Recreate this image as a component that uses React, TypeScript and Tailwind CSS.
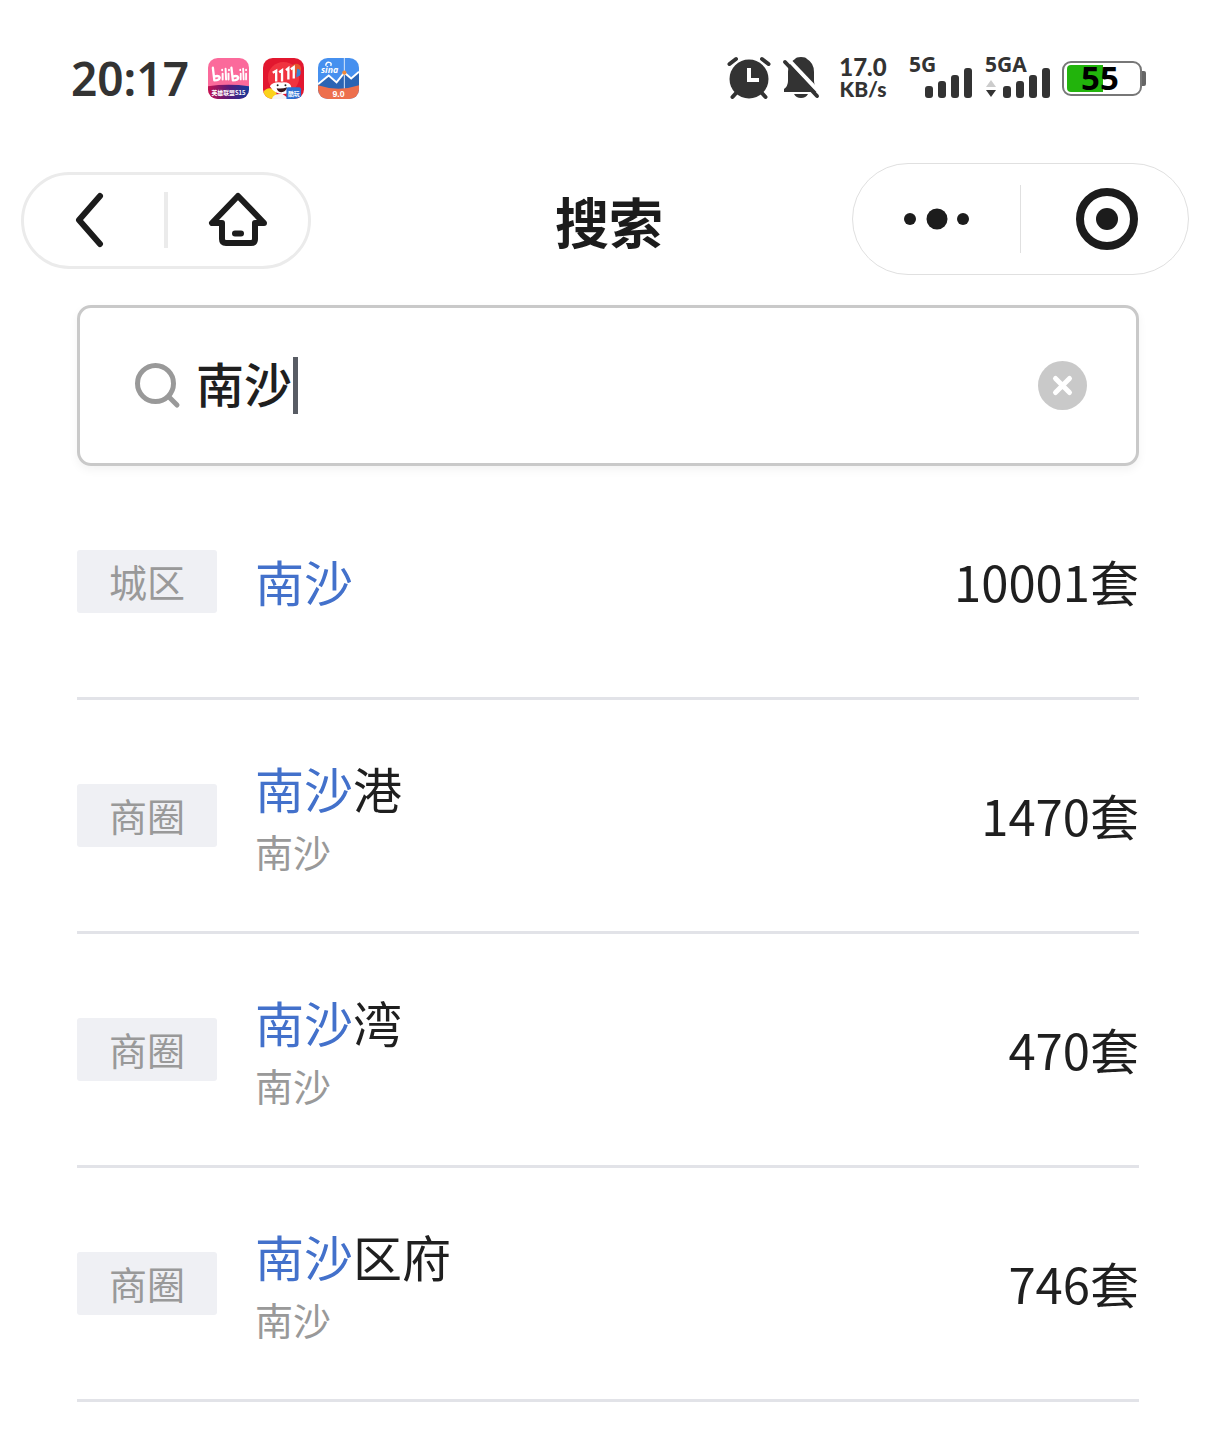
import { useRef, useState } from "react";

type Result = { tag: string; match: string; rest: string; area?: string; count: number };

const results: Result[] = [
  { tag: "城区", match: "南沙", rest: "", count: 10001 },
  { tag: "商圈", match: "南沙", rest: "港", area: "南沙", count: 1470 },
  { tag: "商圈", match: "南沙", rest: "湾", area: "南沙", count: 470 },
  { tag: "商圈", match: "南沙", rest: "区府", area: "南沙", count: 746 },
];

function BiliIcon() {
  return (
    <svg className="size-[41px]" viewBox="0 0 42 42" aria-label="bilibili">
      <defs>
        <linearGradient id="bili-band" x1="0" x2="1">
          <stop offset="0" stopColor="#c3124f" />
          <stop offset="0.5" stopColor="#5a1a78" />
          <stop offset="1" stopColor="#123a9c" />
        </linearGradient>
        <clipPath id="bili-clip"><rect width="42" height="42" rx="10" /></clipPath>
      </defs>
      <g clipPath="url(#bili-clip)">
        <rect width="42" height="42" fill="#fb6a9b" />
        <path d="M0 29Q21 26 42 29V42H0Z" fill="url(#bili-band)" />
        <g fill="none" stroke="#fff" strokeWidth="2.400" strokeLinecap="round" strokeLinejoin="round">
          <path d="M5 10L6.500 23Q12 23 12 20Q11 17.500 6.500 19" />
          <path d="M15 16V22M18 11L18.500 22M21 16V22M14.500 12V12.500M21.500 12V12.500" strokeWidth="2" />
          <path d="M24 10L25.500 23Q31 23 31 20Q30 17.500 25.500 19" />
          <path d="M33.500 16V22M36 11L36.500 22M39 16V22M33 12V12.500M39 12V12.500" strokeWidth="1.800" />
        </g>
        <text x="21" y="37.500" textAnchor="middle" fill="#fff" fontSize="6" fontWeight="700">英雄联盟S15</text>
      </g>
    </svg>
  );
}

function ShoppingIcon() {
  return (
    <svg className="size-[41px]" viewBox="0 0 42 42" aria-label="11.11">
      <defs><clipPath id="shop-clip"><rect width="42" height="42" rx="10" /></clipPath></defs>
      <g clipPath="url(#shop-clip)">
        <rect width="42" height="42" fill="#e2172f" />
        <circle cx="21" cy="20" r="16" fill="#f03340" />
        <circle cx="34" cy="11" r="5" fill="#e4572f" />
        <path d="M35 11Q40 11 38 18L34 20Z" fill="#3e83d0" />
        <g stroke="#fff" strokeWidth="2.400" fill="none" strokeLinejoin="miter">
          <path d="M10 15L13.500 13V24M16.500 14.500L19.500 12.500V24M23.500 12.500L26 10.500V22M28.500 11.500L31.500 9.500V21" />
        </g>
        <path d="M0 42V35Q5 28 13 33L15 42Z" fill="#fbd21c" />
        <path d="M7 29Q10 24 19 25Q28 24 29 30Q28 37 20 37Q12 37 7 29Z" fill="#fff" />
        <circle cx="15" cy="28" r="1" fill="#222" />
        <circle cx="23" cy="28" r="1" fill="#222" />
        <path d="M14 31Q19 32 25 30Q23 35 19 35Q15 35 14 31Z" fill="#38151a" />
        <path d="M9 42Q11 36 20 37L27 42Z" fill="#f4f4f6" />
        <rect x="24" y="30" width="15" height="13" rx="2" fill="#2d6fd2" />
        <text x="31.500" y="38.500" textAnchor="middle" fill="#fff" fontSize="6" fontWeight="700">酷玩</text>
      </g>
    </svg>
  );
}

function SinaIcon() {
  return (
    <svg className="size-[41px]" viewBox="0 0 42 42" aria-label="sina">
      <defs><clipPath id="sina-clip"><rect width="42" height="42" rx="10" /></clipPath></defs>
      <g clipPath="url(#sina-clip)">
        <rect width="42" height="42" fill="#4690ef" />
        <path d="M0 27L11 18L19 25L27 15L34 21L42 14V34H0Z" fill="#2b64b4" />
        <path d="M27 0V32" stroke="#dbe9fb" strokeWidth="1" />
        <path d="M0 27L11 18L19 25L27 15L34 21L42 14" fill="none" stroke="#fff" strokeWidth="2" />
        <path d="M0 28Q21 35 42 28V42H0Z" fill="#ed6f4d" />
        <circle cx="27" cy="15" r="2.200" fill="#f08a3c" />
        <path d="M8 8Q8 4 11.500 4.500Q14.500 5 13 8" fill="none" stroke="#fff" strokeWidth="1.500" />
        <text x="3" y="15" fill="#fff" fontSize="9" fontWeight="700" fontStyle="italic" fontFamily="Open Sans">sina</text>
        <text x="21" y="40" textAnchor="middle" fill="#fff" fontSize="9" fontWeight="700" fontFamily="Liberation Sans">9.0</text>
      </g>
    </svg>
  );
}

function AlarmIcon() {
  return (
    <svg className="h-[44px] w-[44px]" viewBox="0 0 44 44" aria-label="闹钟">
      <g stroke="#333" strokeWidth="4" strokeLinecap="round">
        <path d="M2.500 8L9 3M35 3L41.500 8M10 36L5.500 41M34 36L38.500 41" />
      </g>
      <circle cx="22" cy="23" r="19.500" fill="#333" />
      <path d="M22 12V24H32" fill="none" stroke="#fff" strokeWidth="4" />
    </svg>
  );
}

function MutedBellIcon() {
  return (
    <svg className="h-[44px] w-[38px]" viewBox="0 0 38 44" aria-label="静音">
      <path d="M19 1Q24 1 25 3Q32 7 32 16V25Q32 30 36 33V36H2V33Q6 30 6 25V16Q6 7 13 3Q14 1 19 1Z" fill="#333" />
      <path d="M12 38H26Q24 42 19 42Q14 42 12 38Z" fill="#333" />
      <path d="M5 2L38 37" stroke="#fff" strokeWidth="4" />
      <path d="M3 6L35 40" stroke="#333" strokeWidth="4" strokeLinecap="round" />
    </svg>
  );
}

function SignalBars() {
  return (
    <svg className="h-[30px] w-[48px]" viewBox="0 0 48 30" fill="#333" aria-hidden="true">
      <rect x="0" y="18" width="8" height="12" rx="3" />
      <rect x="13" y="13" width="8" height="17" rx="3" />
      <rect x="26" y="7" width="8" height="23" rx="3" />
      <rect x="39" y="0" width="8" height="30" rx="3" />
    </svg>
  );
}

function StatusBar() {
  return (
    <header className="flex h-[156px] items-center justify-between pr-[70px] pl-[71px] text-[#333]">
      <div className="flex items-center">
        <time className="w-[137px] font-['Noto_Sans'] text-[46px] leading-[56px] font-semibold">20:17</time>
        <div className="flex gap-[14px]">
          <BiliIcon />
          <ShoppingIcon />
          <SinaIcon />
        </div>
      </div>
      <div className="flex items-center font-['Noto_Sans'] font-bold">
        <AlarmIcon />
        <div className="ml-[11px]"><MutedBellIcon /></div>
        <p className="ml-[17px] w-[52px] text-center font-['Lato'] text-[21px] leading-[22px] font-black first-line:text-[24px]">
          17.0 KB/s
        </p>
        <div className="ml-5 flex w-[64px] flex-col pt-[2px]">
          <span className="text-[21px] leading-[8px]">5G</span>
          <span className="self-end"><SignalBars /></span>
        </div>
        <div className="ml-3 flex w-[66px] flex-col pt-[2px]">
          <span className="text-[21px] leading-[8px]">5GA</span>
          <span className="flex items-end justify-between">
            <svg className="h-[18px] w-[12px]" viewBox="0 0 12 18" aria-hidden="true">
              <path d="M6 0L11 7H1Z" fill="#ccc" />
              <path d="M6 17L1 10H11Z" fill="#333" />
            </svg>
            <SignalBars />
          </span>
        </div>
        <div className="ml-[11px] flex items-center">
          <div className="relative flex h-[35px] w-[80px] items-center justify-center rounded-[9px] border-2 border-[#777] pr-1 pb-[2px] text-[33px] leading-none text-black">
            <span className="absolute inset-y-[2px] left-[3px] w-[36px] rounded-l-[4px] bg-[#22b40c]" />
            <span className="relative">55</span>
          </div>
          <span className="h-[15px] w-[4px] rounded-r-[2px] bg-[#666]" />
        </div>
      </div>
    </header>
  );
}

function NavBar() {
  return (
    <nav className="flex items-center justify-between pt-[7px] pr-[27px] pl-[21px] text-[#1c1c1c]">
      <div className="flex flex-1">
        <div className="mt-[2px] flex h-[97px] w-[290px] items-center rounded-full border-3 border-[#ebebeb]">
          <button type="button" aria-label="返回" className="flex h-full flex-1 items-center justify-center">
            <svg className="mr-[10px] h-[56px] w-[30px]" viewBox="0 0 30 56" fill="none" stroke="currentColor" strokeWidth="6" strokeLinecap="round" strokeLinejoin="round">
              <path d="M26 4L5 28L26 52" />
            </svg>
          </button>
          <span className="h-[56px] w-1 bg-[#ebebeb]" />
          <button type="button" aria-label="首页" className="flex h-full flex-1 items-center justify-center">
            <svg className="h-[56px] w-[60px]" viewBox="0 0 60 56" fill="none" stroke="currentColor" strokeWidth="6" strokeLinecap="round" strokeLinejoin="round">
              <path d="M30 4L4 31H14V47Q14 51 18 51H43Q47 51 47 47V31H56Z" />
              <path d="M27 41.500H33" />
            </svg>
          </button>
        </div>
      </div>
      <h1 className="mt-1 pl-2 text-[54px] leading-[80px] font-bold">搜索</h1>
      <div className="flex flex-1 justify-end">
        <div className="flex h-[112px] w-[337px] items-center rounded-full border border-[#e0e0e0]">
          <button type="button" aria-label="更多" className="flex h-full flex-1 items-center justify-center">
            <svg className="h-[22px] w-[66px]" viewBox="0 0 66 22" fill="currentColor">
              <circle cx="6" cy="11" r="6" />
              <circle cx="33" cy="11" r="10.500" />
              <circle cx="59" cy="11" r="6" />
            </svg>
          </button>
          <span className="h-[68px] w-px bg-[#e0e0e0]" />
          <button type="button" aria-label="关闭" className="flex h-full flex-1 items-center justify-center">
            <svg className="ml-1 size-[62px]" viewBox="0 0 62 62">
              <circle cx="31" cy="31" r="27" fill="none" stroke="currentColor" strokeWidth="8" />
              <circle cx="31" cy="31" r="11" fill="currentColor" />
            </svg>
          </button>
        </div>
      </div>
    </nav>
  );
}

function SearchBox() {
  const [query, setQuery] = useState("南沙");
  const input = useRef<HTMLInputElement>(null);
  return (
    <label className="mx-[77px] mt-[30px] flex h-[161px] cursor-text items-center rounded-[14px] border-3 border-[#c9c9c9] pr-[49px] pl-[54px] shadow-[0_4px_10px_rgba(0,0,0,0.05)]">
      <svg className="size-[48px] shrink-0" viewBox="0 0 48 48" fill="none" stroke="#999" strokeWidth="5" strokeLinecap="round" aria-hidden="true">
        <circle cx="21.500" cy="21.500" r="18" />
        <path d="M35 35L43 43" />
      </svg>
      <input
        ref={input}
        aria-label="搜索"
        value={query}
        onChange={(e) => setQuery(e.target.value)}
        className="ml-[14px] field-sizing-content h-[80px] pr-px pb-[8px] text-[48px] font-medium text-[#1f1f1f] caret-transparent outline-none"
      />
      <span className="h-[57px] w-[5px] shrink-0 bg-[#585c64]" />
      <button
        type="button"
        aria-label="清除"
        onClick={() => {
          setQuery("");
          input.current?.focus();
        }}
        className="ml-auto shrink-0"
      >
        <svg className="size-[49px]" viewBox="0 0 49 49">
          <circle cx="24.500" cy="24.500" r="24.500" fill="#c9c9c9" />
          <path d="M17.500 17.500L31.500 31.500M31.500 17.500L17.500 31.500" stroke="#fff" strokeWidth="5" strokeLinecap="round" />
        </svg>
      </button>
    </label>
  );
}

function ResultRow({ tag, match, rest, area, count }: Result) {
  return (
    <li className="border-b-3 border-[#e2e3e8]">
      <a href="#" className="flex min-h-[231px] items-center text-[49px] leading-[72px] text-[#1f1f1f]">
        <span className="flex h-[63px] w-[140px] items-center justify-center rounded-[3px] bg-[#eff0f4] pb-[2px] text-[38px] text-[#999]">{tag}</span>
        <span className="ml-[38px] flex flex-1 flex-col pb-[2px]">
          <span>
            <span className="text-[#4371cb]">{match}</span>
            {rest}
          </span>
          {area && <span className="text-[38px] leading-[54px] text-[#999]">{area}</span>}
        </span>
        <span className="pb-[2px]">{count}套</span>
      </a>
    </li>
  );
}

export default function App() {
  return (
    <div className="min-h-screen bg-white font-['Noto_Sans_CJK_SC',sans-serif]">
      <StatusBar />
      <NavBar />
      <main>
        <SearchBox />
        <ul className="mx-[77px]">
          {results.map((r) => (
            <ResultRow key={r.match + r.rest} {...r} />
          ))}
        </ul>
      </main>
    </div>
  );
}
